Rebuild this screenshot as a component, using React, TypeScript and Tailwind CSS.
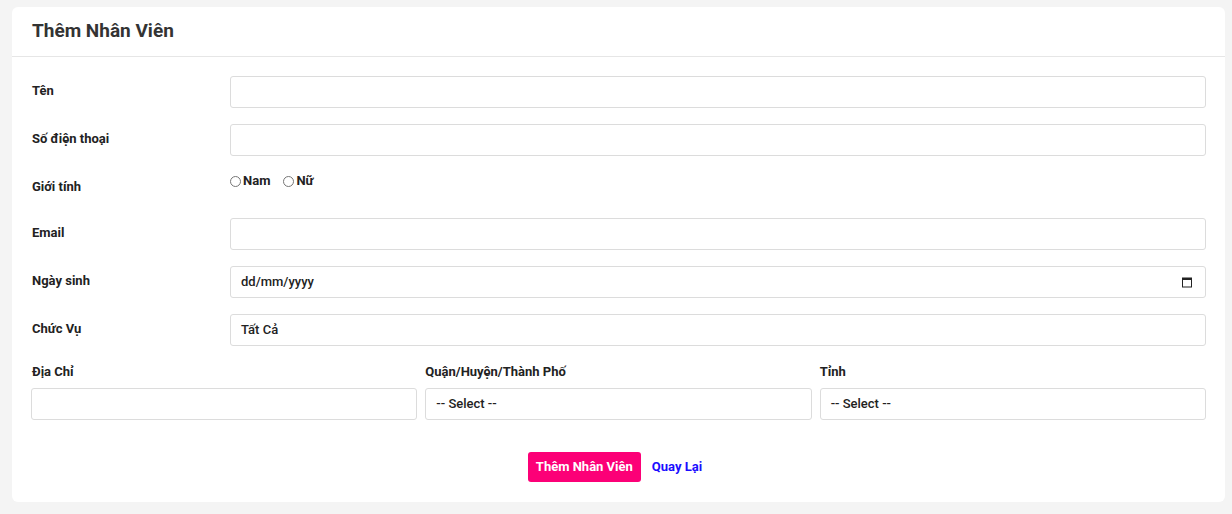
import React from 'react';

const labelCls = 'w-[199px] shrink-0 pl-[1px] pt-[6px] text-[13px] leading-[18px] font-bold text-[#222]';
const inputCls =
  'h-[32px] w-full rounded-[3px] border border-[#dcdcdc] bg-white px-[10px] text-[13px] font-medium text-[#222] outline-none';

function Row({ label, children }: { label: string; children: React.ReactNode }) {
  return (
    <div className="flex items-start">
      <label className={labelCls}>{label}</label>
      <div className="flex-1">{children}</div>
    </div>
  );
}

function Radio({ label }: { label: string }) {
  return (
    <label className="flex items-center gap-[2px] text-[13px] font-bold leading-[18px] text-[#222]">
      <span className="h-[11px] w-[11px] rounded-full border border-[#767676] bg-white" />
      {label}
    </label>
  );
}

export default function App() {
  return (
    <div className="min-h-[514px] bg-[#f4f4f4] pt-[7px] pl-[12px] pr-[7px] pb-[12px]" style={{ fontFamily: 'Roboto, "Liberation Sans", sans-serif' }}>
      <div className="rounded-[6px] bg-white">
        {/* Header */}
        <div className="flex h-[50px] items-center border-b border-[#e6e6e6] px-[20px]">
          <h1 className="text-[19px] font-bold text-[#333]">Thêm Nhân Viên</h1>
        </div>

        {/* Body */}
        <div className="px-[19px] pt-[19px] pb-[20px]">
          <div className="flex flex-col gap-[16px]">
            <Row label="Tên">
              <input className={inputCls} />
            </Row>
            <Row label="Số điện thoại">
              <input className={inputCls} />
            </Row>
            <div className="flex h-[30px] items-start">
              <label className={labelCls}>Giới tính</label>
              <div className="flex items-center gap-[13px] pt-0">
                <Radio label="Nam" />
                <Radio label="Nữ" />
              </div>
            </div>
            <Row label="Email">
              <input className={inputCls} />
            </Row>
            <Row label="Ngày sinh">
              <div className={`${inputCls} flex items-center justify-between`}>
                <span>dd/mm/yyyy</span>
                <svg width="12" height="12" viewBox="0 0 12 12" className="mr-[2px]">
                  <rect x="1.5" y="2.5" width="9" height="8.5" fill="none" stroke="#222" strokeWidth="1" />
                  <rect x="1" y="1.5" width="10" height="2.5" fill="#222" />
                </svg>
              </div>
            </Row>
            <Row label="Chức Vụ">
              <div className={`${inputCls} flex items-center`}>Tất Cả</div>
            </Row>
          </div>

          {/* Address */}
          <div className="mt-[17px] grid grid-cols-3 gap-x-[8px]">
            <div>
              <div className="mb-[7px] pl-[1px] text-[13px] font-bold leading-[18px] text-[#222]">Địa Chỉ</div>
              <input className={inputCls} />
            </div>
            <div>
              <div className="mb-[7px] text-[13px] font-bold leading-[18px] text-[#222]">Quận/Huyện/Thành Phố</div>
              <div className={`${inputCls} flex items-center`}>-- Select --</div>
            </div>
            <div>
              <div className="mb-[7px] text-[13px] font-bold leading-[18px] text-[#222]">Tỉnh</div>
              <div className={`${inputCls} flex items-center`}>-- Select --</div>
            </div>
          </div>

          {/* Actions */}
          <div className="mt-[32px] flex items-center justify-center gap-[11px] pr-[7px]">
            <button className="h-[30px] rounded-[3px] bg-[#fc0077] px-[8px] text-[13px] font-bold text-white">
              Thêm Nhân Viên
            </button>
            <a className="text-[13px] font-bold text-[#1a0dff]">Quay Lại</a>
          </div>
        </div>
      </div>
    </div>
  );
}
